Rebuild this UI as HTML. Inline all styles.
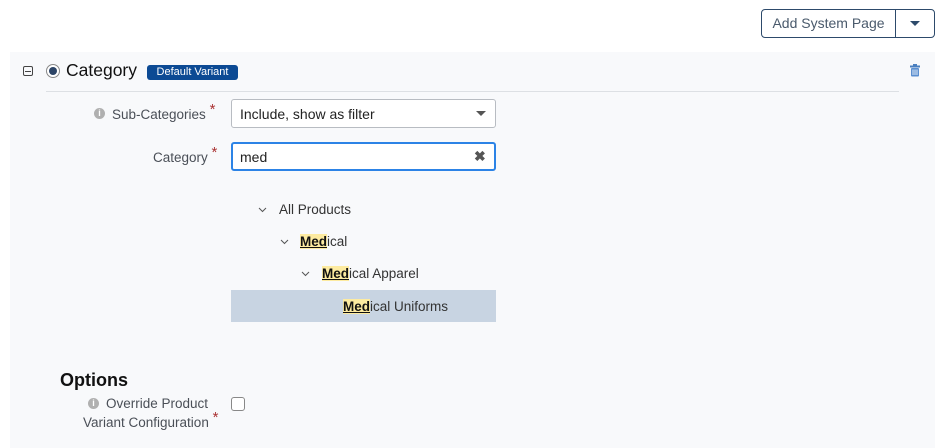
<!DOCTYPE html>
<html><head><style>
*{margin:0;padding:0;box-sizing:border-box}
body{width:952px;height:448px;background:#fff;font-family:"Liberation Sans",sans-serif;position:relative;overflow:hidden;color:#333}
.a{position:absolute}
.panel{left:10px;top:52px;width:925px;height:396px;background:#f8f9fb}
.btn{left:761px;top:9px;width:174px;height:29px;border:1px solid #2d4a6b;border-radius:4px;background:#fff}
.lbl{font-size:13.5px;color:#4a4f57;text-align:right}
.star{color:#a33;font-size:15px;position:relative;top:-5px}
.inp{background:#fff;border:1px solid #b8bcc2;border-radius:3px;font-size:14px;color:#222;padding:6px 8px}
.hl{background:#fdeba0;font-weight:bold;text-decoration:underline;color:#111}
.tr{font-size:13.5px;color:#333}
</style></head><body>
<div class="a panel"></div>
<div class="a btn"><div class="a" style="left:0;top:0;width:134px;height:27px;border-right:1px solid #2d4a6b;text-align:center;line-height:27px;font-size:14px;color:#4a5a6c">Add System Page</div>
<svg class="a" style="left:148px;top:11px" width="10" height="6"><path d="M0 0H10L5 5Z" fill="#2d4a6b"/></svg></div>
<div class="a" style="left:23px;top:66px;width:10px;height:10px;border:1px solid #444;border-radius:2px"></div>
<div class="a" style="left:25px;top:70.5px;width:6px;height:1px;background:#444"></div>
<div class="a" style="left:46px;top:64px;width:14px;height:14px;border:1px solid #888;border-radius:50%;background:#fff"></div>
<div class="a" style="left:49px;top:67px;width:8px;height:8px;border-radius:50%;background:#2c4466"></div>
<div class="a" style="left:66px;top:60px;font-size:17.5px;color:#111">Category</div>
<div class="a" style="left:147px;top:65px;width:91px;height:15px;background:#0c4a94;border-radius:3px;color:#fff;font-size:11px;text-align:center;line-height:15px">Default Variant</div>
<svg class="a" style="left:909px;top:64px" width="12" height="13"><rect x="1" y="1.5" width="10" height="2" fill="#4a7fbf"/><rect x="4" y="0" width="4" height="2" fill="#4a7fbf"/><rect x="2" y="4" width="8" height="8.5" rx="1" fill="#5b8fd0"/><path d="M4 5.5V11M6 5.5V11M8 5.5V11" stroke="#fff" stroke-width="0.8"/></svg>
<div class="a" style="left:46px;top:91px;width:853px;height:1px;background:#dde0e4"></div>
<div class="a" style="left:94px;top:108px;width:11px;height:11px;border-radius:50%;background:#b0b0b0;color:#fff;font-size:9px;font-weight:bold;text-align:center;line-height:11px">i</div>
<div class="a lbl" style="left:112px;top:106px">Sub-Categories <span class="star">*</span></div>
<div class="a inp" style="left:231px;top:99px;width:265px;height:29px">Include, show as filter</div>
<svg class="a" style="left:476px;top:111px" width="10" height="6"><path d="M0 0H10L5 5Z" fill="#555"/></svg>
<div class="a lbl" style="left:153px;top:149px">Category <span class="star">*</span></div>
<div class="a inp" style="left:231px;top:142px;width:265px;height:29px;border:2px solid #2c83e6;padding:5px 7px">med</div>
<div class="a" style="left:474px;top:148px;font-size:14px;font-weight:bold;color:#555">✖</div>
<svg class="a" style="left:258px;top:207px" width="9" height="6"><path d="M1 1L4.5 4.5L8 1" stroke="#555" fill="none"/></svg>
<div class="a tr" style="left:279px;top:202px">All Products</div>
<svg class="a" style="left:280px;top:239px" width="9" height="6"><path d="M1 1L4.5 4.5L8 1" stroke="#555" fill="none"/></svg>
<div class="a tr" style="left:300px;top:234px"><span class="hl">Med</span>ical</div>
<svg class="a" style="left:301px;top:271px" width="9" height="6"><path d="M1 1L4.5 4.5L8 1" stroke="#555" fill="none"/></svg>
<div class="a tr" style="left:322px;top:266px"><span class="hl">Med</span>ical Apparel</div>
<div class="a" style="left:231px;top:290px;width:265px;height:32px;background:#c8d4e2"></div>
<div class="a tr" style="left:343px;top:299px"><span class="hl">Med</span>ical Uniforms</div>
<div class="a" style="left:60px;top:370px;font-size:18px;font-weight:bold;color:#111">Options</div>
<div class="a" style="left:88px;top:398px;width:11px;height:11px;border-radius:50%;background:#b0b0b0;color:#fff;font-size:9px;font-weight:bold;text-align:center;line-height:11px">i</div>
<div class="a lbl" style="left:106px;top:396px">Override Product</div>
<div class="a lbl" style="left:83px;top:414px">Variant Configuration <span class="star">*</span></div>
<div class="a" style="left:231px;top:397px;width:14px;height:14px;border:1px solid #888;border-radius:3px;background:#fff"></div>
</body></html>
